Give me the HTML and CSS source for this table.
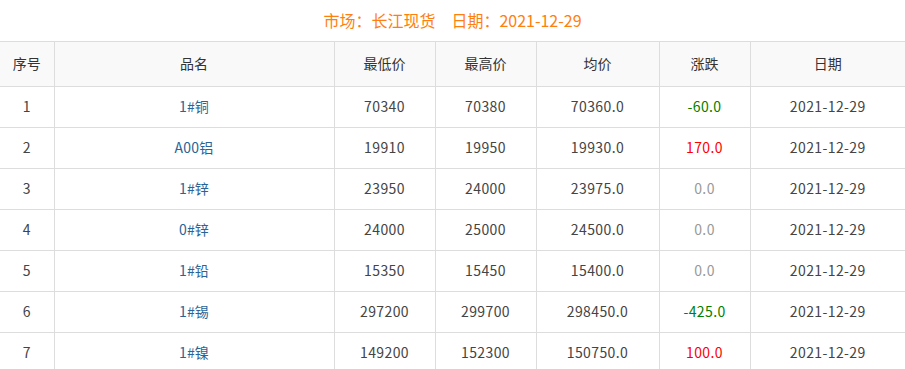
FILE: index.html
```html
<!DOCTYPE html>
<html lang="zh-CN">
<head>
<meta charset="utf-8">
<title>长江现货</title>
<link rel="stylesheet" href="styles.css">
</head>
<body>
<div class="page">
  <h2 class="title">市场：长江现货　日期：2021-12-29</h2>
  <table class="price-table">
    <colgroup>
      <col class="c-no"><col class="c-name"><col class="c-low"><col class="c-high"><col class="c-avg"><col class="c-chg"><col class="c-date">
    </colgroup>
    <thead>
      <tr><th>序号</th><th>品名</th><th>最低价</th><th>最高价</th><th>均价</th><th>涨跌</th><th>日期</th></tr>
    </thead>
    <tbody>
      <tr><td>1</td><td class="name">1#铜</td><td>70340</td><td>70380</td><td>70360.0</td><td class="down">-60.0</td><td>2021-12-29</td></tr>
      <tr><td>2</td><td class="name">A00铝</td><td>19910</td><td>19950</td><td>19930.0</td><td class="up">170.0</td><td>2021-12-29</td></tr>
      <tr><td>3</td><td class="name">1#锌</td><td>23950</td><td>24000</td><td>23975.0</td><td class="flat">0.0</td><td>2021-12-29</td></tr>
      <tr><td>4</td><td class="name">0#锌</td><td>24000</td><td>25000</td><td>24500.0</td><td class="flat">0.0</td><td>2021-12-29</td></tr>
      <tr><td>5</td><td class="name">1#铅</td><td>15350</td><td>15450</td><td>15400.0</td><td class="flat">0.0</td><td>2021-12-29</td></tr>
      <tr><td>6</td><td class="name">1#锡</td><td>297200</td><td>299700</td><td>298450.0</td><td class="down">-425.0</td><td>2021-12-29</td></tr>
      <tr><td>7</td><td class="name">1#镍</td><td>149200</td><td>152300</td><td>150750.0</td><td class="up">100.0</td><td>2021-12-29</td></tr>
    </tbody>
  </table>
</div>
</body>
</html>
```

FILE: styles.css
```css
html, body {
  margin: 0;
  padding: 0;
  background: #fff;
}
body {
  font-family: "Noto Sans CJK SC", "Noto Sans", sans-serif;
  font-size: 14px;
  color: #333;
}
.page {
  width: 905px;
  overflow: hidden;
}
.title {
  margin: 0;
  height: 41px;
  line-height: 40px;
  text-align: center;
  font-size: 16px;
  font-weight: normal;
  color: #ff7f0e;
}
.price-table {
  width: 905px;
  border-collapse: collapse;
  table-layout: fixed;
}
.c-no { width: 54px; }
.c-name { width: 280px; }
.c-low { width: 101px; }
.c-high { width: 101px; }
.c-avg { width: 123px; }
.c-chg { width: 91px; }
.c-date { width: 155px; }
.price-table th,
.price-table td {
  text-align: center;
  border: 1px solid #dddddd;
  padding: 0 0 2px 0;
  font-weight: normal;
}
.price-table th:first-child,
.price-table td:first-child { border-left: none; }
.price-table th:last-child,
.price-table td:last-child { border-right: none; }
.price-table thead th {
  height: 42px;
  background: #f9f9f9;
  color: #333;
}
.price-table tbody td {
  height: 38px;
  color: #444;
  letter-spacing: 0.4px;
}
.price-table td.name { color: #2a6496; letter-spacing: 0.2px; }
.price-table td.down { color: #008000; }
.price-table td.up { color: #ff0000; }
.price-table td.flat { color: #999; }
```
